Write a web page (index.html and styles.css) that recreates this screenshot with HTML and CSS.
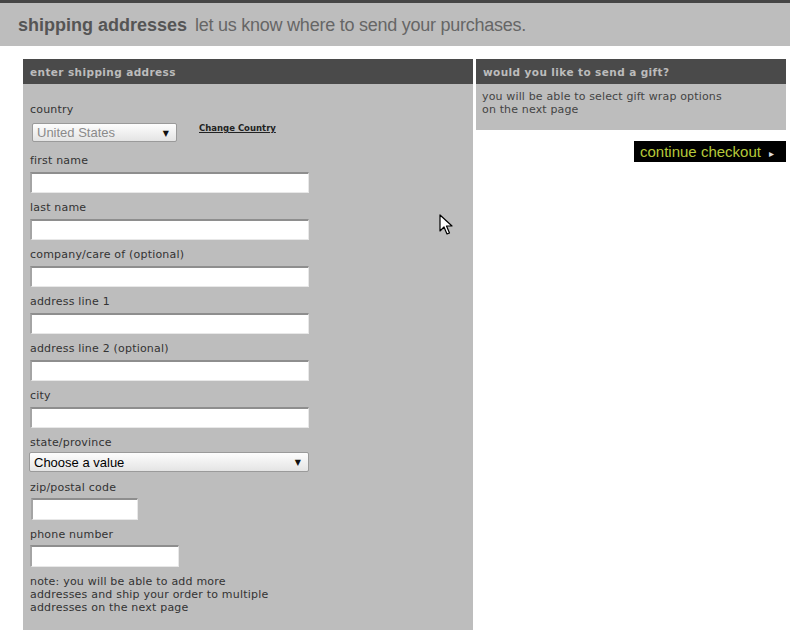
FILE: index.html
```html
<!DOCTYPE html>
<html lang="en">
<head>
  <meta charset="UTF-8">
  <meta name="viewport" content="width=device-width, initial-scale=1.0">
  <title>Shipping Addresses</title>
  <link rel="stylesheet" href="styles.css">
</head>
<body>
  <header class="page-head">
    <h1><strong>shipping addresses</strong> <span>let us know where to send your purchases.</span></h1>
  </header>

  <div class="checkout">
    <section class="panel ship-panel">
      <h2 class="panel-title">enter shipping address</h2>
      <form class="panel-body">
        <label class="field-label">country</label>
        <div class="country-row">
          <div class="select-wrap country-select">
            <select disabled>
              <option>United States</option>
            </select>
            <span class="arrow">&#9660;</span>
          </div>
          <a href="#" class="change-link">Change Country</a>
        </div>

        <label class="field-label">first name</label>
        <input type="text" class="text-input wide">

        <label class="field-label">last name</label>
        <input type="text" class="text-input wide">

        <label class="field-label">company/care of (optional)</label>
        <input type="text" class="text-input wide">

        <label class="field-label">address line 1</label>
        <input type="text" class="text-input wide">

        <label class="field-label">address line 2 (optional)</label>
        <input type="text" class="text-input wide">

        <label class="field-label">city</label>
        <input type="text" class="text-input wide">

        <label class="field-label">state/province</label>
        <div class="select-wrap state-select">
          <select>
            <option>Choose a value</option>
          </select>
          <span class="arrow">&#9660;</span>
        </div>

        <label class="field-label">zip/postal code</label>
        <input type="text" class="text-input zip">

        <label class="field-label">phone number</label>
        <input type="text" class="text-input phone">

        <p class="note">note: you will be able to add more<br>addresses and ship your order to multiple<br>addresses on the next page</p>
      </form>
    </section>

    <aside class="side">
      <section class="panel gift-panel">
        <h2 class="panel-title">would you like to send a gift?</h2>
        <p class="gift-text">you will be able to select gift wrap options<br>on the next page</p>
      </section>
      <a href="#" class="continue-btn">continue checkout <span class="tri">&#9656;</span></a>
    </aside>
  </div>

  <!-- mouse pointer from the screenshot -->
  <svg class="cursor" width="14" height="22" viewBox="0 0 14 22">
    <path d="M1 1 L1 17 L5 13 L8 20 L10.5 19 L7.5 12 L13 12 Z" fill="#fff" stroke="#000" stroke-width="1.2" stroke-linejoin="round"/>
  </svg>
</body>
</html>
```

FILE: styles.css
```css
body {
  margin: 0;
  padding: 0;
  background-color: #fff;
  font-family: "DejaVu Sans", Verdana, sans-serif;
}

.page-head {
  border-top: 3px solid #464646;
  background-color: #bdbdbd;
  height: 43px;
  padding-left: 18px;
}

.page-head h1 {
  margin: 0;
  font-family: "Liberation Sans", Arial, sans-serif;
  font-size: 18px;
  font-weight: normal;
  line-height: 45px;
  color: #666;
  white-space: nowrap;
}

.page-head strong {
  color: #555;
  margin-right: 3px;
}

.page-head span {
  letter-spacing: -0.25px;
}

.checkout {
  display: flex;
  align-items: flex-start;
  margin-top: 13px;
  padding-left: 23px;
}

.panel {
  background-color: #bdbdbd;
}

.panel-title {
  margin: 0;
  height: 25px;
  line-height: 26px;
  padding-left: 7px;
  background-color: #4a4a4a;
  color: #bcbcbc;
  font-size: 10.5px;
  font-weight: bold;
  letter-spacing: 0.4px;
}

.ship-panel {
  width: 450px;
}

.panel-body {
  display: flex;
  flex-direction: column;
  align-items: flex-start;
  padding: 19px 7px 16px;
}

.field-label {
  display: block;
  font-size: 11px;
  letter-spacing: 0.2px;
  line-height: 13px;
  color: #333;
  margin-bottom: 5px;
}

.country-row {
  display: flex;
  align-items: flex-start;
  margin: 2px 0 12px 2px;
}

.select-wrap {
  position: relative;
}

.select-wrap select {
  appearance: none;
  -webkit-appearance: none;
  display: block;
  width: 100%;
  margin: 0;
  padding: 0 0 0 4px;
  border: 1px solid #9a9a9a;
  border-radius: 2px;
  background: linear-gradient(#fdfdfd, #e4e4e4);
  font-family: "Liberation Sans", Arial, sans-serif;
  font-size: 13px;
  color: #000;
}

.select-wrap .arrow {
  position: absolute;
  right: 8px;
  top: 50%;
  transform: translateY(-50%);
  font-size: 8px;
  color: #111;
  pointer-events: none;
}

.country-select {
  width: 145px;
}

.country-select select {
  height: 19px;
  color: #8a8a8a;
  opacity: 1;
}

.change-link {
  margin: 0 0 0 22px;
  font-size: 8.5px;
  font-weight: bold;
  color: #222;
  text-decoration: underline;
}

.state-select {
  width: 280px;
  margin: -2px 0 9px -1px;
}

.state-select select {
  height: 20px;
}

.text-input {
  box-sizing: border-box;
  height: 21px;
  margin: 0 0 8px;
  padding: 0 3px;
  background-color: #fff;
  border-style: solid;
  border-width: 2px 1px 1px 2px;
  border-color: #8e8e8e #e8e8e8 #e8e8e8 #a4a4a4;
  outline: none;
}

.wide {
  width: 279px;
}

.zip {
  width: 107px;
  height: 22px;
  margin-top: -1px;
  margin-left: 1px;
}

.phone {
  width: 149px;
  height: 22px;
  margin-top: -1px;
}

.note {
  margin: 0;
  font-size: 11px;
  letter-spacing: 0.2px;
  line-height: 13px;
  color: #333;
}

.side {
  display: flex;
  flex-direction: column;
  align-items: flex-end;
  width: 310px;
  margin-left: 3px;
}

.gift-panel {
  width: 100%;
  height: 71px;
}

.gift-text {
  margin: 0;
  padding: 6px 6px 0;
  font-size: 11px;
  letter-spacing: 0.15px;
  line-height: 13px;
  color: #444;
}

.continue-btn {
  box-sizing: border-box;
  display: block;
  width: 152px;
  height: 21px;
  margin-top: 11px;
  padding-left: 6px;
  background-color: #000;
  color: #b6c93a;
  font-family: "Liberation Sans", Arial, sans-serif;
  font-size: 15px;
  line-height: 21px;
  text-decoration: none;
}

.continue-btn .tri {
  color: #ddd;
  font-size: 10px;
  margin-left: 4px;
}

.cursor {
  position: absolute;
  left: 439px;
  top: 214px;
}
```
